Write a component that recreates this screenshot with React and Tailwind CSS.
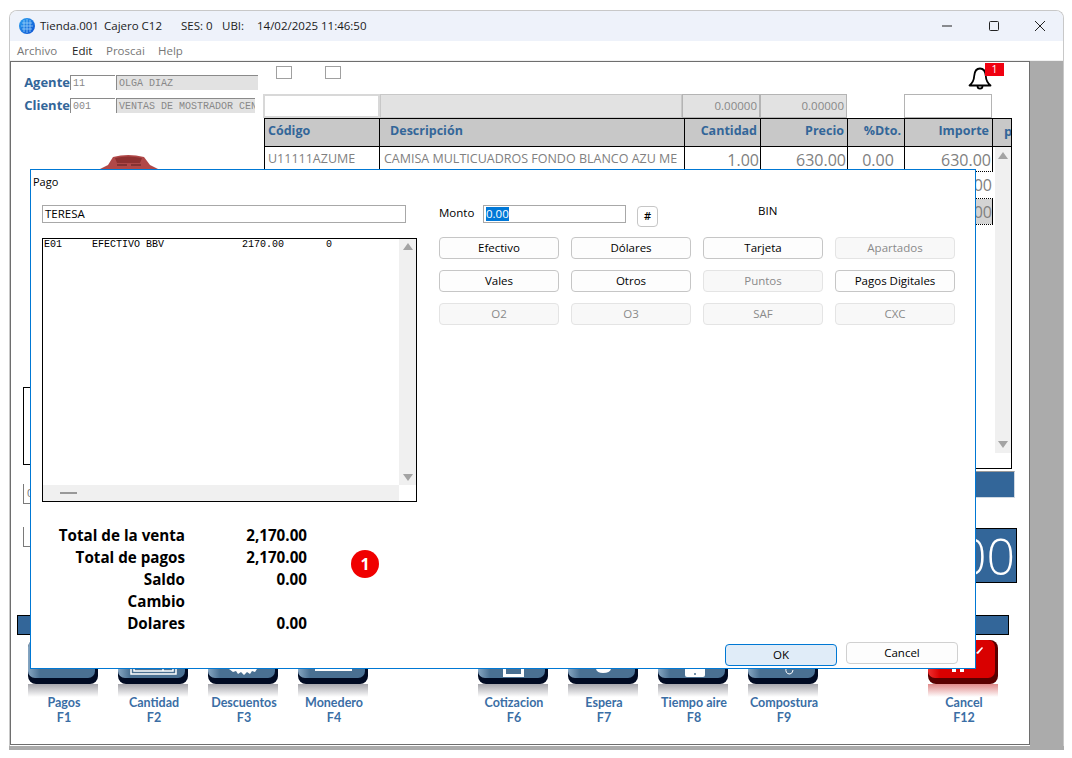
import React from "react";

const Tri = ({ up = true }) => (
  <svg width="10" height="7" viewBox="0 0 10 7" className="block">
    <path d={up ? "M5 0L10 7H0Z" : "M5 7L10 0H0Z"} fill="#a3a3a3" />
  </svg>
);

const Globe = () => (
  <svg width="16" height="16" viewBox="0 0 16 16">
    <defs>
      <linearGradient id="gl" x1="0" y1="0" x2="1" y2="1">
        <stop offset="0" stopColor="#2ea3f2" />
        <stop offset="1" stopColor="#0a4fd0" />
      </linearGradient>
    </defs>
    <circle cx="8" cy="8" r="8" fill="url(#gl)" />
    <path d="M3 5H13M2 8H14M3 11H13M5 2V14M8 1V15M11 2V14" stroke="#a8d8fb" strokeWidth="0.7" fill="none" />
  </svg>
);

const Key = ({ red, children }) => {
  const id = red ? "r" : "b";
  const face = red ? "#d90000" : "#4a7092";
  const hi = red ? "#f03030" : "#86a6c2";
  const base = red ? "#5a0000" : "#000a22";
  return (
    <svg width="70" height="57" viewBox="0 0 70 57" className="block">
      <defs>
        <linearGradient id={`ref${id}`} x1="0" y1="0" x2="0" y2="1">
          <stop offset="0" stopColor={red ? "#e08a8a" : "#a6a6ac"} />
          <stop offset="1" stopColor="#ffffff" />
        </linearGradient>
        <linearGradient id={`side${id}`} x1="0" y1="0" x2="1" y2="0">
          <stop offset="0" stopColor={hi} />
          <stop offset="0.18" stopColor={face} />
          <stop offset="1" stopColor={face} />
        </linearGradient>
      </defs>
      <rect x="0" y="44" width="70" height="13" fill={`url(#ref${id})`} />
      <rect x="0" y="0" width="70" height="44" rx="8" fill={base} />
      <rect x="0" y="0" width="67" height="38" rx="7" fill={`url(#side${id})`} />
      {children}
    </svg>
  );
};

const ActionKey = ({ label, fkey, red, children }) => (
  <div className="flex w-[70px] flex-col items-center">
    <Key red={red}>{children}</Key>
    <div className="ml-[2px] mt-[-1px] whitespace-nowrap text-center font-['Lato'] text-[12.5px] font-bold leading-[14.5px] text-[#3a6ea5]">
      <div>{label}</div>
      <div>{fkey}</div>
    </div>
  </div>
);

const MBtn = ({ children, off }) => (
  <div
    className={`flex h-[22px] w-[120px] items-center justify-center rounded-[4px] border text-[11.5px] ${
      off ? "border-[#e4e4e4] bg-[#f8f8f8] text-[#8a8a8a]" : "border-[#c6c6c6] bg-[#fdfdfd] text-black"
    }`}
  >
    {children}
  </div>
);

const TotalRow = ({ label, value }) => (
  <div className="flex h-[22px] items-center text-[15.2px] font-bold text-black">
    <div className="w-[144px] text-right">{label}</div>
    <div className="w-[122px] text-right">{value}</div>
  </div>
);

const cols = [115, 305, 76, 87, 57, 88];

const HeadCell = ({ w, right, children, cls = "" }) => (
  <div
    style={{ width: w }}
    className={`flex h-full shrink-0 items-center border-r border-black px-[3px] pb-[3px] text-[12.5px] font-bold text-[#336699] ${
      right ? "justify-end" : ""
    } ${cls}`}
  >
    {children}
  </div>
);

const Cell = ({ w, right, children }) => (
  <div
    style={{ width: w }}
    className={`flex h-full shrink-0 items-center overflow-hidden whitespace-nowrap border-r border-black pl-[3px] pr-[1px] pt-[1px] text-[#808080] ${
      right ? "justify-end text-[16px]" : "text-[12.5px]"
    }`}
  >
    {children}
  </div>
);

const Field = ({ label, code, name, nameW }) => (
  <div className="flex h-[15px] items-center">
    <div className="w-[47px] text-right text-[13px] font-bold leading-[15px] text-[#336699]">{label}</div>
    <div className="flex h-[15px] w-[45px] items-center border-l border-t border-[#8a8a8a] bg-white pl-[2px] font-['Liberation_Mono'] text-[10px] text-[#888]">
      {code}
    </div>
    <div
      style={{ width: nameW }}
      className="ml-[1px] flex h-[15px] items-center overflow-hidden whitespace-nowrap border-l border-t border-[#8a8a8a] bg-[#e2e2e2] pl-[2px] font-['Liberation_Mono'] text-[10px] text-[#888]"
    >
      {name}
    </div>
  </div>
);

export default function App() {
  return (
    <div className="relative h-[758px] w-[1072px] overflow-hidden bg-white font-['Open_Sans',sans-serif]">
      {/* Window */}
      <div className="absolute left-[9px] top-[10px] flex h-[740px] w-[1055px] flex-col overflow-hidden rounded-t-[8px] border-x border-t border-[#c8c8c8] bg-white">
        {/* Title bar */}
        <div className="flex h-[30px] shrink-0 items-center bg-[#eef2fa] text-[11.5px] text-[#1a1a1a]">
          <div className="ml-[9px]"><Globe /></div>
          <span className="ml-[5px] w-[64px]">Tienda.001</span>
          <span className="w-[77px]">Cajero C12</span>
          <span className="w-[41px]">SES: 0</span>
          <span className="w-[35px]">UBI:</span>
          <span>14/02/2025 11:46:50</span>
          <div className="ml-auto flex items-center">
            <svg width="12" height="12" viewBox="0 0 12 12" className="mr-[35px]"><path d="M1 6H11" stroke="#222" strokeWidth="1" /></svg>
            <svg width="12" height="12" viewBox="0 0 12 12" className="mr-[34px]"><rect x="1.5" y="1.5" width="9" height="9" rx="1" stroke="#222" strokeWidth="1" fill="none" /></svg>
            <svg width="12" height="12" viewBox="0 0 12 12" className="mr-[17px]"><path d="M1 1L11 11M11 1L1 11" stroke="#222" strokeWidth="1" /></svg>
          </div>
        </div>
        {/* Menu */}
        <div className="flex h-[20px] shrink-0 items-center border-b border-[#f0f0f0] bg-white text-[11.5px] text-[#777]">
          <span className="ml-[7px] w-[55px]">Archivo</span>
          <span className="w-[34px] text-[#222]">Edit</span>
          <span className="w-[52px]">Proscai</span>
          <span>Help</span>
        </div>
        {/* Body */}
        <div className="flex min-h-0 flex-1">
          <div className="flex h-[684px] w-[1020px] shrink-0 flex-col border-b border-l border-t border-[#6e6e6e] border-r bg-white">
            <div className="flex h-[553px] shrink-0">
              {/* Left column */}
              <div className="w-[252px] shrink-0">
                <div className="ml-[12px] mt-[13px] flex flex-col gap-[8px]">
                  <Field label="Agente" code="11" name="OLGA DIAZ" nameW={142} />
                  <Field label="Cliente" code="001" name="VENTAS DE MOSTRADOR CEN" nameW={139} />
                </div>
                <svg width="58" height="14" viewBox="0 0 58 14" className="ml-[89px] mt-[42px] block">
                  <path d="M0 14L8 10L13 2Q28 -2 44 2L50 10L58 14Z" fill="#b04848" />
                  <path d="M15 3Q28 0 42 3L40 8H17Z" fill="#8e3030" />
                  <path d="M17 10H27M31 10H41" stroke="#5a1c1c" strokeWidth="1" />
                </svg>
                <div className="ml-[12px] mt-[218px] h-[78px] w-[200px] border border-black" />
                <div className="ml-[12px] mt-[19px] flex h-[20px] w-[200px] items-center border-b border-l border-[#7a7a7a] border-t-[#e0e0e0] pl-[3px] text-[11px] text-[#777]">0</div>
                <div className="ml-[12px] mt-[23px] h-[20px] w-[200px] border-b border-l border-[#7a7a7a]" />
              </div>
              {/* Right column */}
              <div className="flex min-w-0 flex-1 flex-col">
                <div className="flex h-[32px] shrink-0">
                  <div className="ml-[13px] mt-[4px] h-[13px] w-[16px] border border-[#a0a0a0]" />
                  <div className="ml-[33px] mt-[4px] h-[13px] w-[16px] border border-[#a0a0a0]" />
                  <div className="relative ml-[627px] mt-[5px] h-[24px] w-[24px]">
                    <svg width="24" height="24" viewBox="0 0 24 24" fill="none" stroke="#000" strokeWidth="1.8" strokeLinejoin="round" strokeLinecap="round">
                      <path d="M12 1.5C8 1.5 6.5 5 6.2 9C6 13 4.5 16 1.5 18.5H22.5C19.5 16 18 13 17.8 9C17.5 5 16 1.5 12 1.5Z" />
                      <path d="M9.5 19C9.5 22.5 14.5 22.5 14.5 19" />
                    </svg>
                    <div className="absolute left-[17px] top-[-4px] flex h-[13px] w-[19px] items-center justify-center bg-[#f00010] text-[10.5px] leading-none text-white">1</div>
                  </div>
                </div>
                <div className="flex h-[24px] shrink-0">
                  <div className="h-full w-[117px] border-2 border-[#d8d8d8] bg-white" />
                  <div className="h-full w-[302px] border border-[#c8c8c8] bg-[#e2e2e2]" />
                  <div className="flex h-full w-[78px] items-center justify-end border border-[#b4b4b4] bg-[#e2e2e2] pr-[2px] text-[11.5px] text-[#888]">0.00000</div>
                  <div className="flex h-full w-[87px] items-center justify-end border border-[#b4b4b4] bg-[#e2e2e2] pr-[2px] text-[11.5px] text-[#888]">0.00000</div>
                  <div className="ml-[57px] h-full w-[88px] border border-[#b4b4b4] bg-white" />
                </div>
                {/* Table */}
                <div className="ml-[1px] flex h-[351px] w-[748px] shrink-0 flex-col border border-black bg-white">
                  <div className="flex h-[28px] shrink-0 border-b border-black bg-[#c8c8c8]">
                    <HeadCell w={cols[0]}>Código</HeadCell>
                    <HeadCell w={cols[1]} cls="pl-[10px]">Descripción</HeadCell>
                    <HeadCell w={cols[2]} right>Cantidad</HeadCell>
                    <HeadCell w={cols[3]} right>Precio</HeadCell>
                    <HeadCell w={cols[4]} right>%Dto.</HeadCell>
                    <HeadCell w={cols[5]} right>Importe</HeadCell>
                    <div className="overflow-hidden pl-[11px] pt-[3px] text-[13px] font-bold text-[#336699]">p</div>
                  </div>
                  <div className="flex min-h-0 flex-1">
                    <div className="w-[728px] shrink-0">
                      <div className="flex h-[24px]">
                        <Cell w={cols[0]}>U11111AZUME</Cell>
                        <Cell w={cols[1]}>
                          <span className="pl-[1px]">CAMISA MULTICUADROS FONDO BLANCO AZU ME</span>
                        </Cell>
                        <Cell w={cols[2]} right>1.00</Cell>
                        <Cell w={cols[3]} right>630.00</Cell>
                        <div style={{ width: cols[4] }} className="flex h-full shrink-0 items-center justify-center border-r border-black pl-[4px] pt-[1px] text-[16px] text-[#808080]">0.00</div>
                        <Cell w={cols[5]} right>630.00</Cell>
                      </div>
                      <div className="flex h-[27px] justify-end border-t border-dotted border-black">
                        <div className="flex w-[88px] items-center justify-end pr-[1px] text-[16px] text-[#808080]">770.00</div>
                      </div>
                      <div className="flex h-[27px] justify-end border-y border-dotted border-black">
                        <div className="flex w-[88px] items-center justify-end border-r border-black bg-[#d4d4d4] text-[16px] text-[#808080]">770.00</div>
                      </div>
                    </div>
                    <div className="ml-[2px] flex w-[16px] shrink-0 flex-col">
                      <div className="flex flex-1 flex-col items-center justify-between bg-[#f0f0f0] py-[5px]">
                        <Tri />
                        <Tri up={false} />
                      </div>
                      <div className="h-[15px] bg-white" />
                    </div>
                  </div>
                </div>
                {/* Blue bar */}
                <div className="ml-[1px] mt-[2px] h-[27px] w-[751px] shrink-0 border-t border-[#9a9a9a] border-b border-r border-b-[#cfd8e2] border-r-[#cfd8e2] bg-[#336699]" />
                {/* Grand total */}
                <div className="ml-[1px] mt-[30px] flex h-[55px] w-[753px] shrink-0 items-center justify-end overflow-hidden border border-black bg-[#336699] pr-[1px] text-[50px] font-light leading-none text-white">2,170.00</div>
              </div>
            </div>
            <div className="ml-[6px] h-[20px] w-[992px] shrink-0 border border-black bg-[#336699]" />
            {/* Action keys */}
            <div className="ml-[17px] mt-[5px] flex">
              <div className="flex gap-[20px]">
                <ActionKey label="Pagos" fkey="F1" />
                <ActionKey label="Cantidad" fkey="F2">
                  <path d="M13 20H58V34H13ZM16 24H55V31H16ZM45 24V31" fill="none" stroke="#fff" strokeWidth="1.5" />
                </ActionKey>
                <ActionKey label="Descuentos" fkey="F3">
                  <path d="M21 29H49L47 32L44 31L42 34L39 32L36 35L33 32L30 34L28 31L25 32Z" fill="#fff" />
                </ActionKey>
                <ActionKey label="Monedero" fkey="F4">
                  <rect x="17" y="28" width="37" height="3" fill="#fff" />
                </ActionKey>
              </div>
              <div className="ml-[110px] flex gap-[20px]">
                <ActionKey label="Cotizacion" fkey="F6">
                  <path d="M25 28V37H46V28" fill="#fff" />
                  <rect x="28" y="29" width="15" height="5" fill="#4a7092" />
                </ActionKey>
                <ActionKey label="Espera" fkey="F7">
                  <path d="M28 29H43Q42 33 35 33Q29 33 28 29Z" fill="#fff" />
                </ActionKey>
                <ActionKey label="Tiempo aire" fkey="F8">
                  <path d="M27 29H47V35Q47 37 45 37H29Q27 37 27 35Z" fill="#fff" />
                  <circle cx="37" cy="34" r="1" fill="#4a7092" />
                </ActionKey>
                <ActionKey label="Compostura" fkey="F9">
                  <path d="M38 28Q37 34 42 34Q45 33 45 30" fill="none" stroke="#fff" strokeWidth="1" />
                </ActionKey>
              </div>
              <div className="ml-[110px]">
                <ActionKey label="Cancel" fkey="F12" red>
                  <path d="M48 13L54 7L55 8L50 14Z" fill="#fff" />
                  <path d="M24 29H28V32H24ZM32 29H36V32H32Z" fill="#fff" />
                </ActionKey>
              </div>
            </div>
          </div>
          <div className="flex-1 bg-[#ababab]" />
        </div>
      </div>
      <div className="absolute left-[9px] top-[746px] h-[4px] w-[1055px] bg-[#ababab]" />

      {/* Pago dialog */}
      <div className="absolute left-[30px] top-[169px] flex h-[500px] w-[946px] flex-col border border-[#0078d4] bg-white text-black">
        <div className="pl-[2px] pt-[4px] text-[11px] leading-[16px]">Pago</div>
        <div className="flex pt-[15px]">
          <div className="ml-[11px] w-[375px] shrink-0">
            <div className="flex h-[18px] w-[364px] items-center border border-[#a8a8a8] pl-[2px] text-[11.5px]">TERESA</div>
            <div className="mt-[15px] flex h-[264px] flex-col border border-black">
              <div className="flex min-h-0 flex-1">
                <div className="min-w-0 flex-1 whitespace-pre pl-[1px] font-['Liberation_Mono'] text-[10px] leading-[11px] text-black">{"E01     EFECTIVO BBV             2170.00       0"}</div>
                <div className="flex w-[17px] shrink-0 flex-col items-center justify-between bg-[#f0f0f0] py-[4px]">
                  <Tri />
                  <Tri up={false} />
                </div>
              </div>
              <div className="flex h-[16px] shrink-0">
                <div className="flex flex-1 items-center bg-[#f0f0f0] pl-[17px]">
                  <div className="h-[2px] w-[17px] bg-[#999]" />
                </div>
                <div className="w-[17px] bg-white" />
              </div>
            </div>
          </div>
          <div className="ml-[22px]">
            <div className="flex items-start">
              <span className="w-[44px] text-[11.5px] leading-[16px]">Monto</span>
              <div className="flex h-[18px] w-[143px] items-center border border-[#a8a8a8] pl-[2px]">
                <span className="bg-[#0078d7] text-[11.5px] leading-[14px] text-white">0.00</span>
              </div>
              <div className="ml-[11px] mt-[1px] flex h-[21px] w-[21px] items-center justify-center rounded-[4px] border border-[#c6c6c6] text-[11px] font-semibold">#</div>
              <span className="ml-[100px] mt-[-1px] text-[11.5px] leading-[14px]">BIN</span>
            </div>
            <div className="mt-[10px] grid grid-cols-[120px_120px_120px_120px] gap-x-[12px] gap-y-[11px]">
              <MBtn>Efectivo</MBtn>
              <MBtn>Dólares</MBtn>
              <MBtn>Tarjeta</MBtn>
              <MBtn off>Apartados</MBtn>
              <MBtn>Vales</MBtn>
              <MBtn>Otros</MBtn>
              <MBtn off>Puntos</MBtn>
              <MBtn>Pagos Digitales</MBtn>
              <MBtn off>O2</MBtn>
              <MBtn off>O3</MBtn>
              <MBtn off>SAF</MBtn>
              <MBtn off>CXC</MBtn>
            </div>
          </div>
        </div>
        <div className="mt-[22px] flex">
          <div className="ml-[10px]">
            <TotalRow label="Total de la venta" value="2,170.00" />
            <TotalRow label="Total de pagos" value="2,170.00" />
            <TotalRow label="Saldo" value="0.00" />
            <TotalRow label="Cambio" value="" />
            <TotalRow label="Dolares" value="0.00" />
          </div>
          <div className="ml-[44px] mt-[26px] flex h-[28px] w-[28px] items-center justify-center rounded-full bg-[#f00000] text-[16px] font-bold leading-none text-white">1</div>
        </div>
        <div className="mr-[17px] mt-auto mb-[2px] flex items-start justify-end gap-[9px]">
          <div className="mt-[2px] flex h-[22px] w-[112px] items-center justify-center rounded-[4px] border border-[#0078d4] bg-[#e0ecf8] text-[11.5px]">OK</div>
          <div className="flex h-[22px] w-[112px] items-center justify-center rounded-[4px] border border-[#d0d0d0] bg-[#fdfdfd] text-[11.5px]">Cancel</div>
        </div>
      </div>
    </div>
  );
}
